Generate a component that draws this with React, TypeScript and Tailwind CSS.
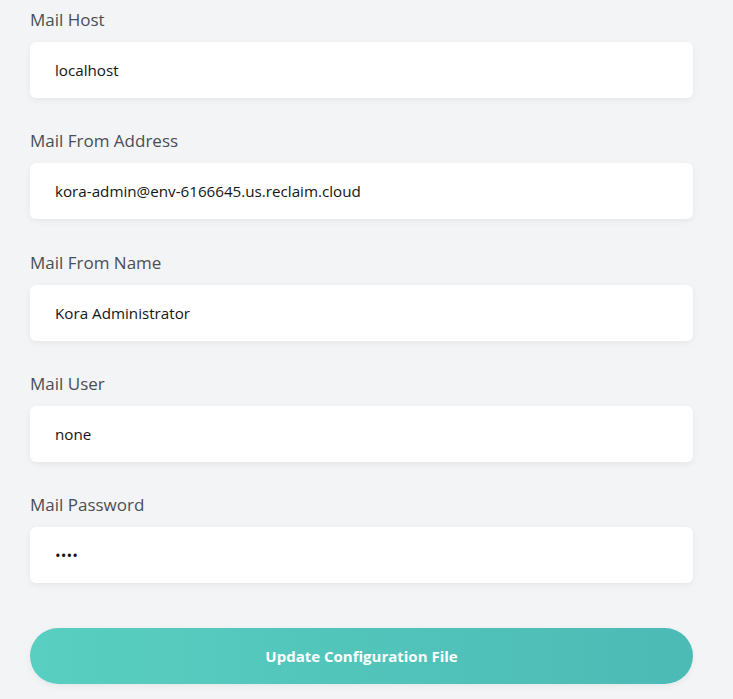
const fields = [
  { label: 'Mail Host', value: 'localhost', type: 'text' },
  { label: 'Mail From Address', value: 'kora-admin@env-6166645.us.reclaim.cloud', type: 'text' },
  { label: 'Mail From Name', value: 'Kora Administrator', type: 'text' },
  { label: 'Mail User', value: 'none', type: 'text' },
  { label: 'Mail Password', value: 'none', type: 'password' },
];

export default function App() {
  return (
    <div
      className="min-h-screen bg-[#f3f4f6] px-[30px] pt-[8px] pb-[15px] w-[733px] h-[699px] overflow-hidden"
      style={{ fontFamily: '"Open Sans", "Noto Sans", sans-serif' }}
    >
      <form onSubmit={(e) => e.preventDefault()} className="w-[663px]">
        {fields.map((f) => (
          <div key={f.label} className="mb-[31.25px]">
            <label className="block text-[17px] leading-[24px] text-[#4a4f55] mb-[10px]">
              {f.label}
            </label>
            <input
              type={f.type}
              defaultValue={f.value}
              readOnly
              className="block w-full h-[56px] rounded-[6px] bg-white px-[25px] text-[15.2px] text-[#151515] shadow-[0_2px_6px_rgba(0,0,0,0.06)] outline-none"
            />
          </div>
        ))}

        <button
          type="submit"
          className="mt-[14px] w-full h-[56px] rounded-full bg-gradient-to-r from-[#58cfc0] to-[#4cbab5] text-white text-[15px] font-bold shadow-[0_2px_6px_rgba(0,0,0,0.06)]"
        >
          Update Configuration File
        </button>
      </form>
    </div>
  );
}
